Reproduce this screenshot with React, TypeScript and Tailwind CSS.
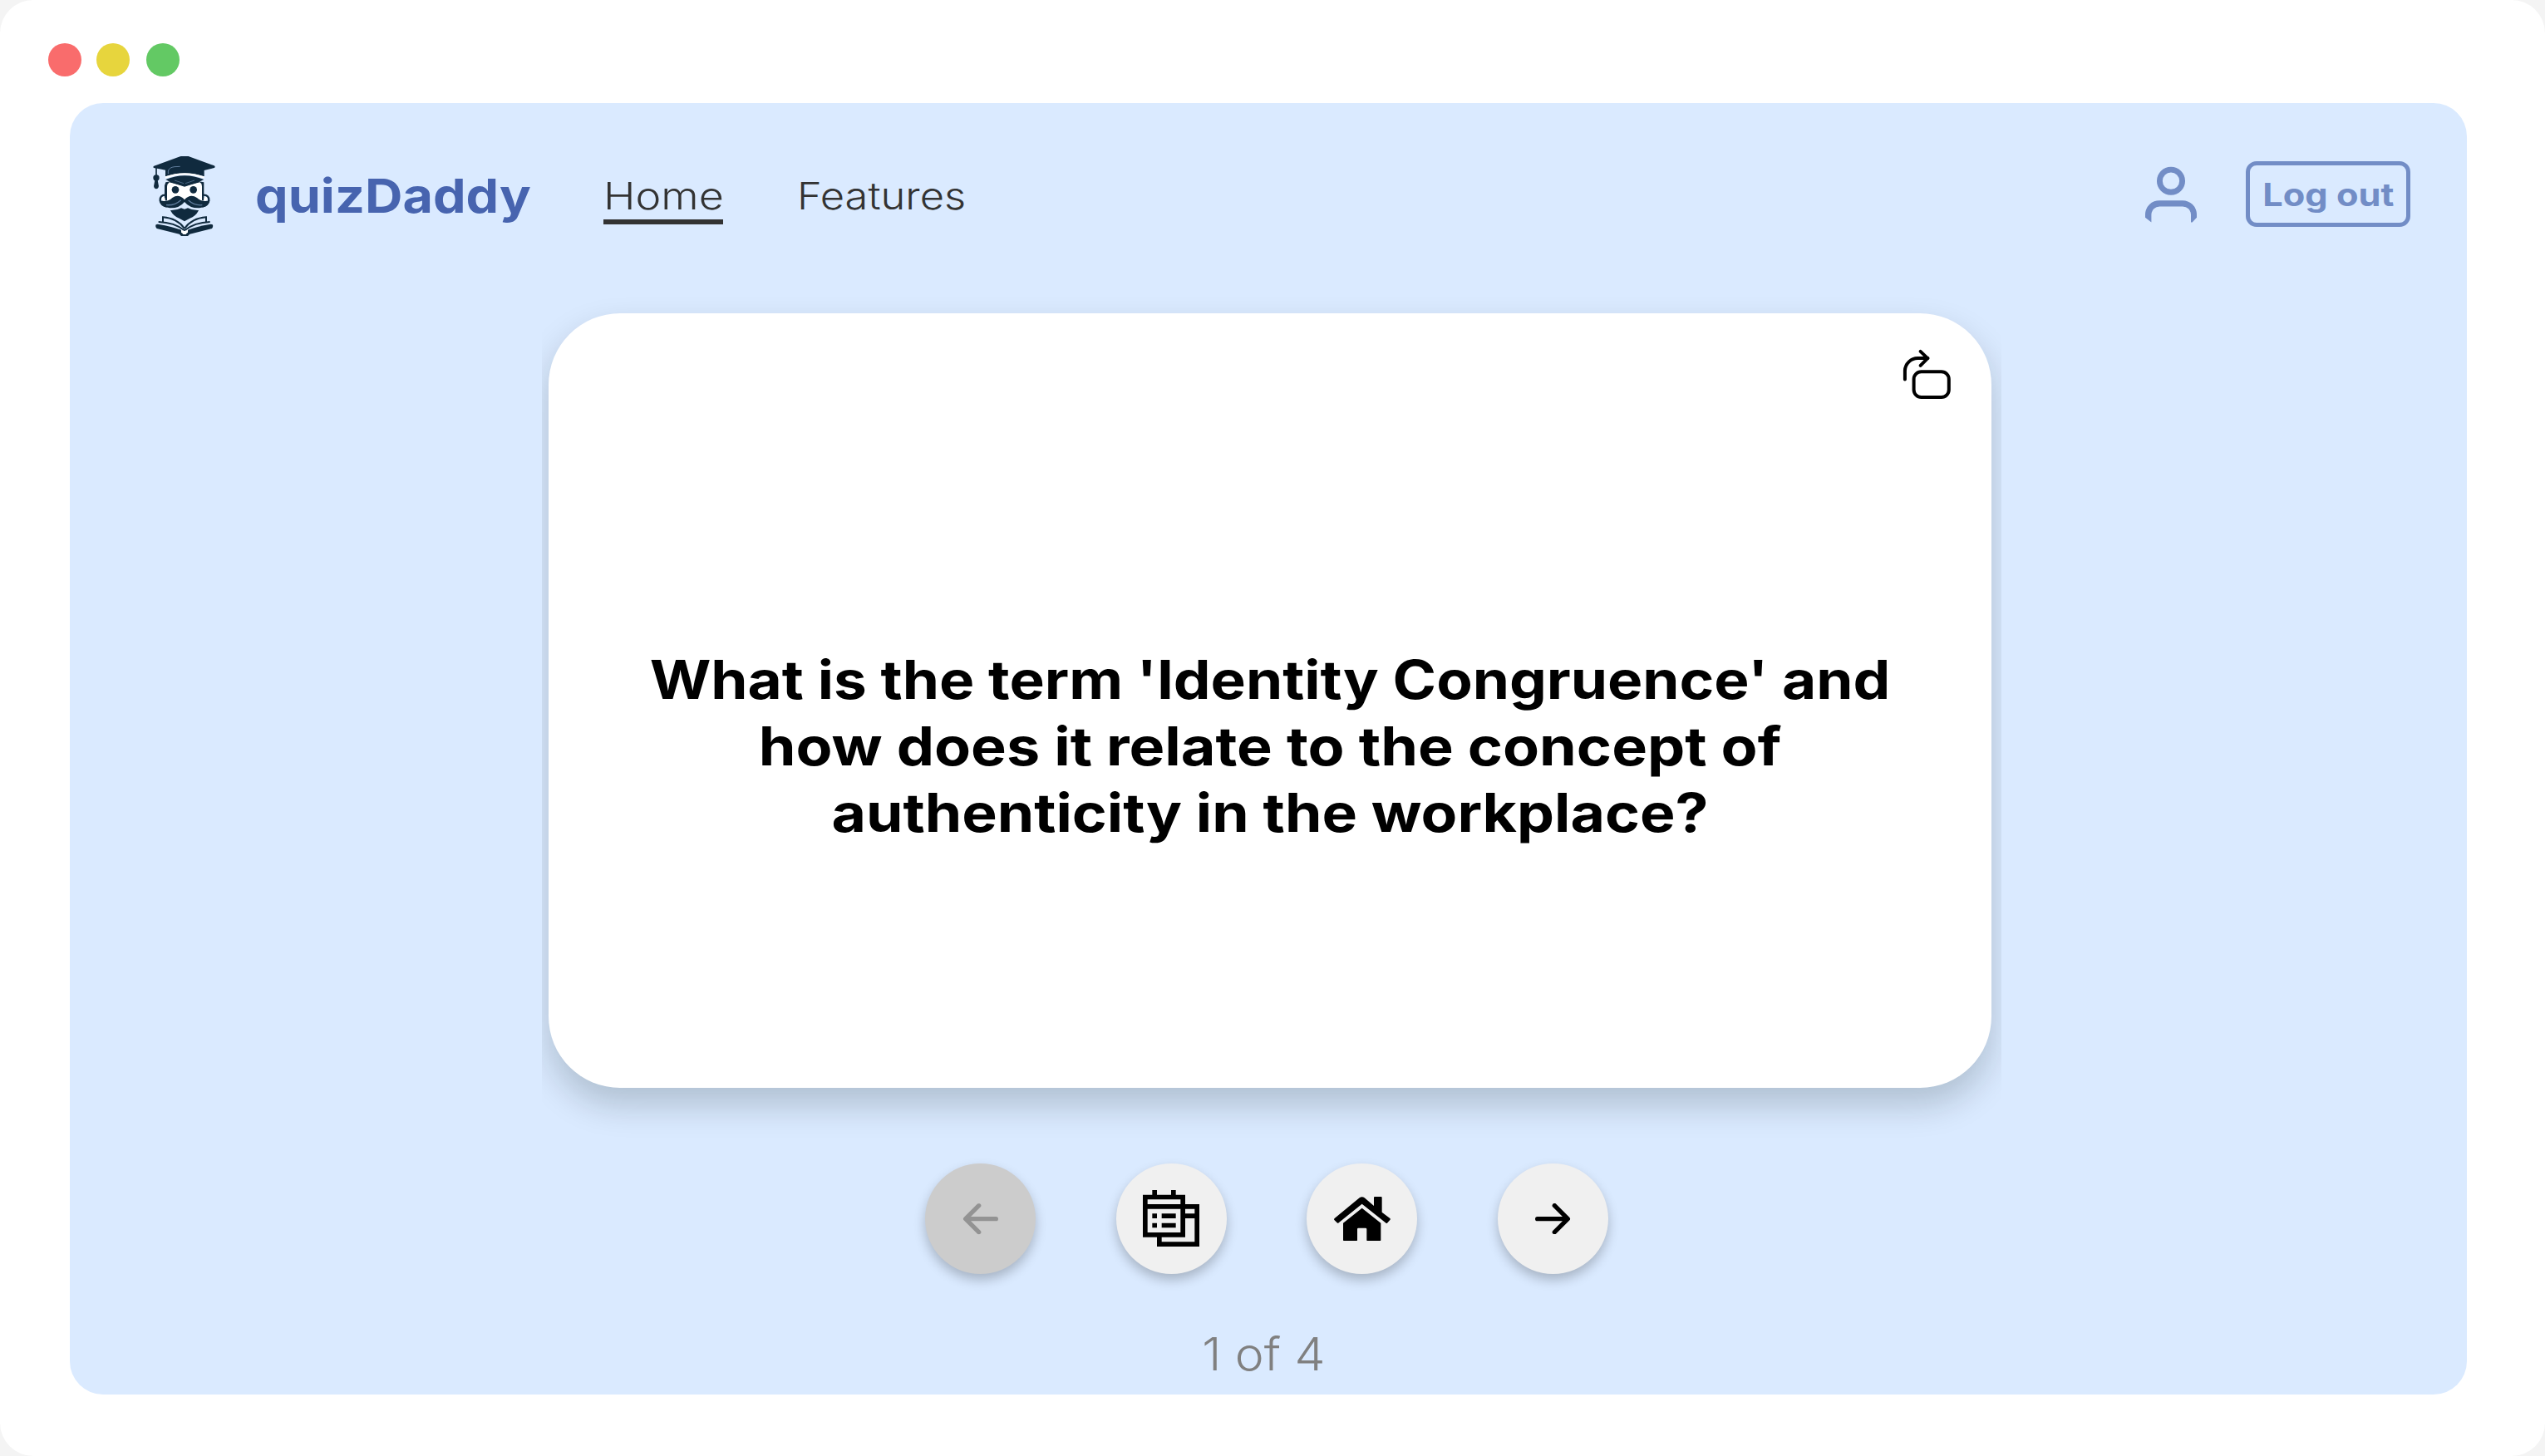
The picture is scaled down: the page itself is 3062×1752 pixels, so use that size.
import type { ReactNode } from 'react';

function Logo() {
  return (
    <svg viewBox="0 0 360 390" className="mt-[-3px] h-[130px] w-[120px] shrink-0" fill="none">
      {/* face */}
      <path d="M118 148 Q186 132 256 148 L256 212 Q230 232 186 216 Q145 232 118 212Z" fill="#ffffff" />
      <path d="M118 148 Q186 132 256 148 L256 214 H249 V162 Q249 152 241 148 L186 162 L131 148 Q123 154 123 165 V214 H114 V160Z" fill="#102a3e" />
      {/* ears */}
      <path d="M116 194 Q98 194 98 213 Q100 230 122 236" stroke="#102a3e" strokeWidth="7" />
      <path d="M255 194 Q274 194 274 213 Q272 230 250 236" stroke="#102a3e" strokeWidth="7" />
      <path d="M104 203 Q114 198 116 208 L116 218 Q104 216 104 203Z" fill="#ffffff" />
      <path d="M268 203 Q258 198 256 208 L256 218 Q268 216 268 203Z" fill="#ffffff" />
      {/* cap */}
      <path d="M173 54 H200 Q204 55 208 57 L293 88 Q299 92 293 96 L257 105 V127 Q186 104 117 127 V104 L103 101 L75 96 Q71 92 76 89 L164 57 Q168 55 173 54Z" fill="#102a3e" />
      <path d="M127 118 V108 Q130 94 150 92 L170 91" stroke="#5f7c9c" strokeWidth="3" />
      <path d="M117 131 Q186 105 257 131" stroke="#ffffff" strokeWidth="7" />
      <path d="M118 138 Q186 110 256 138 L238 147 L186 164 L134 147Z" fill="#102a3e" />
      <path d="M150 141 L183 152 M189 152 L222 141" stroke="#46637f" strokeWidth="3" />
      {/* tassel */}
      <path d="M84 96 V126" stroke="#102a3e" strokeWidth="5" />
      <circle cx="84" cy="132" r="11" fill="#102a3e" />
      <path d="M79 140 H89 L93 162 Q91 172 84 172 Q76 171 75 162Z" fill="#102a3e" />
      {/* eyes */}
      <circle cx="153" cy="175" r="13" fill="#102a3e" />
      <circle cx="218" cy="175" r="13" fill="#102a3e" />
      {/* mustache */}
      <path d="M186 211 Q166 188 142 204 Q125 221 97 214 Q101 238 133 241 Q168 242 186 219 Q204 242 240 241 Q272 238 277 214 Q248 221 231 204 Q206 188 186 211Z" fill="#102a3e" />
      <path d="M120 230 Q150 233 173 212 M200 213 Q222 233 250 230" stroke="#5f7c9c" strokeWidth="4" />
      {/* beard */}
      <path d="M135 249 Q158 250 174 241 L186 245 L198 241 Q214 250 237 249 Q228 270 205 278 L186 289 L167 278 Q145 270 135 249Z" fill="#102a3e" />
      {/* book */}
      <path d="M186 315 Q160 278 108 274 V293 M186 315 Q212 278 264 274 V293" stroke="#102a3e" strokeWidth="6" />
      <path d="M92 291 Q150 293 186 322 Q222 293 278 291" stroke="#102a3e" strokeWidth="6" />
      <path d="M89 299 Q145 308 170 319 V336 L86 315 Q79 307 83 301Z" fill="#102a3e" />
      <path d="M281 299 Q225 308 202 319 V336 L285 315 Q291 307 287 301Z" fill="#102a3e" />
      <path d="M168 318 L186 326 L204 318 V336 L198 342 H174 L168 336Z" fill="#102a3e" />
      <path d="M174 318 Q186 330 198 318 V329 Q193 332 191 336 H181 Q179 332 174 329Z" fill="#ffffff" />
    </svg>
  );
}

function UserIcon() {
  return (
    <svg viewBox="0 0 64 72" className="mt-[-4px] h-[72px] w-[64px] shrink-0" fill="none">
      <circle cx="32" cy="21.7" r="13.6" stroke="#728dc6" strokeWidth="6.9" />
      <path
        d="M18.6 45.2 H45.6 A17 17 0 0 1 63 62.4 V65.8 L57.6 71.4 H56 V62.5 A10 10 0 0 0 46 52.4 H18.6 A10 10 0 0 0 8.4 62.5 V71.4 L1 65.8 V62.4 A17 17 0 0 1 18.6 45.2Z"
        fill="#728dc6"
      />
    </svg>
  );
}

function FlipIcon() {
  return (
    <svg viewBox="0 0 58 62" className="h-[62px] w-[58px]" fill="none" stroke="#000" strokeWidth="4" strokeLinecap="round" strokeLinejoin="round">
      <path d="M2.9 37.5 V27 A15.5 15.5 0 0 1 18.4 12.1 H30.5" />
      <path d="M21.6 3.9 L30.2 12.1 L21.6 20.8" />
      <rect x="13.6" y="28.3" width="42.2" height="30.7" rx="9" />
    </svg>
  );
}

function ArrowIcon({ className }: { className: string }) {
  return (
    <svg viewBox="0 0 129 112" className={className} fill="none" stroke="currentColor" strokeWidth="16" strokeLinecap="round" strokeLinejoin="round">
      <path d="M8 56 H116 M70 8 L118 56 L70 104" />
    </svg>
  );
}

function CardsIcon() {
  return (
    <svg viewBox="0 0 12 12" className="mt-[-1px] size-[68px]" fill="#000">
      <path fillRule="evenodd" d="M0 1H9V10H0Z M1 2V3H8V2Z M1 4V9H8V4Z" />
      <path d="M2 0h1v1.1H2z M6 0h1v1.1H6z M2 5h1v1H2z M4 5h3v1H4z M2 7h1v1H2z M4 7h3v1H4z" />
      <path d="M8.9 3H12V12H3V9.9H4V11H11V6H8.9V5H11V4H8.9Z" />
    </svg>
  );
}

function HomeIcon() {
  return (
    <svg viewBox="0 0 204 160" className="h-[53.3px] w-[68px]" fill="#000">
      <path d="M92 4 Q101 -3 110 4 L144 33 V3 Q144 0 147 0 H170 Q173 0 173 3 V56 L202 78 Q205 81 202 84 L192 95 Q189 97 186 94 L101 26 L17 94 Q14 97 11 94 L1 84 Q-1 81 2 78Z" />
      <path d="M101 41 L169 95 V156 Q169 160 165 160 H122 Q118 160 118 156 V117 Q118 113 114 113 H88 Q84 113 84 117 V156 Q84 160 80 160 H38 Q33 160 33 156 V95Z" />
    </svg>
  );
}

function RoundButton({ label, disabled, children }: { label: string; disabled?: boolean; children: ReactNode }) {
  return (
    <button
      aria-label={label}
      disabled={disabled}
      className={
        'flex size-[133px] items-center justify-center rounded-full shadow-[0_7px_14px_rgba(0,0,0,0.23)] ' +
        (disabled ? 'bg-[#cccccc] text-[#939393]' : 'bg-[#f0f0f0] text-black')
      }
    >
      {children}
    </button>
  );
}

export default function App() {
  return (
    <div className="h-[1752px] w-[3062px] bg-[#f4f4f4] font-['Inter',sans-serif]">
      <div className="flex h-full flex-col rounded-[40px] bg-white px-[84px] pb-[74px]">
        {/* window controls */}
        <div className="-ml-[26px] flex h-[124px] shrink-0 pt-[52px]">
          <span className="size-10 rounded-full bg-[#f96c6c]" />
          <span className="ml-[18px] size-10 rounded-full bg-[#e7d53d]" />
          <span className="ml-5 size-10 rounded-full bg-[#63c964]" />
        </div>

        <div className="flex w-[2884px] flex-1 flex-col rounded-[40px] bg-[#daeaff]">
          <header className="flex h-[224px] shrink-0 items-center pr-[68px] pl-[76px]">
            <Logo />
            <span className="ml-[27px] w-[419px] origin-left scale-x-[1.104] text-[57px] leading-[80px] font-bold text-[#4764af]">quizDaddy</span>
            <nav className="flex text-[45px] leading-[60px] font-light text-[#333333]">
              <a className="mt-[-1px] h-[69px] w-[144px] border-b-[6px] border-[#333333] pt-[5px]">
                <span className="inline-block origin-left scale-x-[1.155]">Home</span>
              </a>
              <a className="ml-[89px] mt-[-1px] pt-[5px]">
                <span className="inline-block origin-left scale-x-[1.125]">Features</span>
              </a>
            </nav>
            <div className="mt-[-5px] ml-auto flex items-center">
              <UserIcon />
              <button className="ml-[58px] flex h-[79px] w-[198px] items-center justify-center rounded-[13px] border-[5px] border-[#728dc6] text-[38px] leading-[60px] font-bold text-[#728dc6]">
                <span className="inline-block scale-x-[1.14] whitespace-nowrap">Log out</span>
              </button>
            </div>
          </header>

          {/* card stage trims the card shadow at its edges */}
          <div className="ml-[568px] h-[1052px] w-[1756px] shrink-0 overflow-hidden pt-[29px] pl-2">
            <div className="relative h-[932px] w-[1736px] rounded-[86px] bg-white pt-[401px] text-center text-[64px] leading-[80px] font-bold text-black shadow-[0_20px_42px_rgba(0,20,20,0.2)]">
              <button aria-label="Flip card" className="absolute top-[42px] right-[49px]">
                <FlipIcon />
              </button>
              <p>
                <span className="block scale-x-[1.11]">What is the term 'Identity Congruence' and</span>
                <span className="block scale-x-[1.123]">how does it relate to the concept of</span>
                <span className="block scale-x-[1.116]">authenticity in the workplace?</span>
              </p>
            </div>
          </div>

          <div className="ml-[1029px] flex shrink-0 gap-[96.5px]">
            <RoundButton label="Previous" disabled>
              <ArrowIcon className="h-[37.3px] w-[43px] rotate-180" />
            </RoundButton>
            <RoundButton label="All cards">
              <CardsIcon />
            </RoundButton>
            <RoundButton label="Home">
              <HomeIcon />
            </RoundButton>
            <RoundButton label="Next">
              <ArrowIcon className="h-[37.3px] w-[43px]" />
            </RoundButton>
          </div>

          <p className="mt-[66px] ml-[1336px] w-[200px] text-center text-[55px] leading-[60px] font-light text-[#808080]">
            <span className="inline-block scale-x-[1.07]">1 of 4</span>
          </p>
        </div>
      </div>
    </div>
  );
}
